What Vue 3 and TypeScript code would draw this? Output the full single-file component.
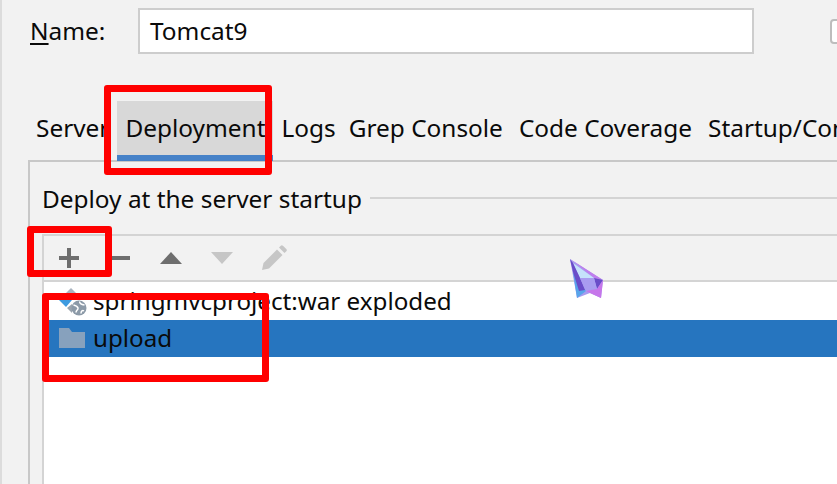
<script setup lang="ts">
const tabs: { label: string; active?: boolean }[] = [
  { label: 'Server' },
  { label: 'Deployment', active: true },
  { label: 'Logs' },
  { label: 'Grep Console' },
  { label: 'Code Coverage' },
  { label: 'Startup/Connection' },
]
</script>

<template>
  <div class="page">
    <div class="name-row">
      <label class="name-label"><span class="mnemonic">N</span>ame:</label>
      <div class="name-input">Tomcat9</div>
      <span class="checkbox"></span>
    </div>

    <nav class="tabs">
      <span v-for="t in tabs" :key="t.label" class="tab" :class="{ active: t.active }">{{ t.label }}</span>
    </nav>

    <section class="panel">
      <div class="group-title">
        <span>Deploy at the server startup</span>
        <span class="group-line"></span>
      </div>

      <div class="box">
        <div class="toolbar">
          <svg class="ic plus" width="20" height="20" viewBox="0 0 20 20"><path d="M8 0h4v8h8v4h-8v8H8v-8H0V8h8z" fill="#6e6e6e" /></svg>
          <svg class="ic minus" width="18" height="4" viewBox="0 0 18 4"><rect width="18" height="4" fill="#6e6e6e" /></svg>
          <svg class="ic up" width="22" height="12" viewBox="0 0 22 12"><path d="M11 0 22 12H0z" fill="#6e6e6e" /></svg>
          <svg class="ic down" width="22" height="12" viewBox="0 0 22 12"><path d="M0 0H22L11 12z" fill="#c6c6c6" /></svg>
          <svg class="ic pencil" width="25" height="25" viewBox="0 0 25 25"><path d="M0 25l1.500-7L15 4.500l5.500 5.500L7 23.500zM17 2.500l1.800-1.800a1.500 1.500 0 0 1 2.100 0l3.400 3.400a1.500 1.500 0 0 1 0 2.100L22.500 8z" fill="#c6c6c6" /></svg>
        </div>

        <ul class="list">
          <li class="row">
            <svg class="row-icon project" width="29" height="28" viewBox="0 0 29 28">
              <path d="M13 0l5 5-5 5-5-5z" fill="#a9b4c0" />
              <path d="M1 12h13l-6 7z" fill="#3d9be0" />
              <path d="M14 16l-5 4 5 5z" fill="#9aa3ad" />
              <circle cx="21" cy="20" r="7.500" fill="#8c9aa8" />
              <path d="M15.500 17c2 .5 4 1 4.500 3s-2 2-2 4.500M22 13.500c-1 1.500 1 3 4.500 3.500M26 23c-1.500-1-3 0-3 2.500" stroke="#fff" stroke-width="1.500" fill="none" />
            </svg>
            <span>springmvcproject:war exploded</span>
          </li>
          <li class="row selected">
            <svg class="row-icon" width="26" height="20" viewBox="0 0 26 20">
              <path d="M0 0h10l3 4h13v16H0z" fill="#87a1bd" />
            </svg>
            <span>upload</span>
          </li>
        </ul>
      </div>
    </section>

    <svg class="gem" width="36" height="42" viewBox="0 0 36 42">
      <path d="M1 1 34 22 32 40 21 35 8 40z" fill="#a79cf0" />
      <path d="M4 14 8 40 17 33 10 24z" fill="#58a5ea" />
      <path d="M1 1 34 22 25 20 8 6z" fill="#c07eec" />
      <path d="M4 5 25 20 11 20z" fill="#c5e2fb" />
      <path d="M1 1 4 5 11 20 16 32 10 33 4 14z" fill="#6a4cc8" />
      <path d="M25 20 34 22 28 31z" fill="#6a4cc8" />
      <path d="M11 20 25 20 28 31 17 33z" fill="#a99cf0" />
      <path d="M17 33 21 35 32 40 34 22 28 31z" fill="#c676ea" />
    </svg>

    <span class="mark mark-tab"></span>
    <span class="mark mark-add"></span>
    <span class="mark mark-list"></span>
  </div>
</template>

<style scoped>
.page {
  position: relative;
  width: 837px;
  height: 484px;
  overflow: hidden;
  background: #f2f2f2;
  color: #0a0a0a;
  font-family: "Noto Sans", "Open Sans", sans-serif;
  font-size: 24.4px;
  box-sizing: border-box;
  padding: 8px 0 0 26px;
  border-left: 2px solid #dcdcdc;
}
.name-row {
  display: flex;
  align-items: center;
  height: 46px;
  padding-left: 2px;
}
.name-label {
  flex: none;
  width: 108px;
  line-height: 46px;
}
.mnemonic {
  text-decoration: underline;
  text-underline-offset: 3px;
}
.name-input {
  box-sizing: border-box;
  width: 616px;
  height: 46px;
  line-height: 42px;
  padding-left: 10px;
  background: #fff;
  border: 2px solid #cdcdcd;
  flex: none;
}
.checkbox {
  box-sizing: border-box;
  width: 24px;
  height: 25px;
  margin-left: 76px;
  flex: none;
  background: #fff;
  border: 2px solid #bdbdbd;
  border-radius: 4px;
}
.tabs {
  display: flex;
  height: 60px;
  margin: 47px 0 0 8px;
  white-space: nowrap;
}
.tab {
  padding: 0 8px;
  line-height: 54px;
  height: 60px;
  box-sizing: border-box;
}
.tab:first-child {
  padding-left: 0;
}
.tab:nth-child(3) {
  padding-right: 5px;
}
.tab.active {
  background: #d8d8d8;
  border-bottom: 6px solid #4682c8;
}
.panel {
  box-sizing: border-box;
  height: 324px;
  margin-top: -1px;
  padding: 18px 0 0 12px;
  border-top: 2px solid #c8c8c8;
  border-left: 2px solid #c8c8c8;
}
.group-title {
  display: flex;
  align-items: center;
  gap: 8px;
  height: 36px;
}
.group-line {
  flex: 1;
  height: 2px;
  background: #d4d4d4;
}
.box {
  margin-top: 18px;
  border-top: 2px solid #d4d4d4;
  border-left: 2px solid #d4d4d4;
}
.toolbar {
  display: flex;
  align-items: center;
  height: 44px;
  border-bottom: 2px solid #d4d4d4;
}
.ic {
  flex: none;
}
.plus {
  margin-left: 15px;
}
.minus {
  margin-left: 33px;
}
.up {
  margin-left: 30px;
}
.down {
  margin-left: 29px;
}
.pencil {
  margin-left: 29px;
  margin-top: -2px;
}
.list {
  list-style: none;
  margin: 0;
  padding: 0;
  height: 300px;
  background: #fff;
  font-size: 24.2px;
}
.row {
  box-sizing: border-box;
  display: flex;
  align-items: center;
  gap: 8px;
  height: 38px;
  padding: 0 0 2px 15px;
  white-space: nowrap;
}
.row-icon {
  flex: none;
}
.project {
  margin: 4px -2px 0 -1px;
}
.row.selected {
  height: 37px;
  background: #2675bf;
}
.gem {
  position: absolute;
  left: 567px;
  top: 258px;
  filter: blur(0.6px);
}
.mark {
  position: absolute;
  box-sizing: border-box;
  border: 7px solid #ff0000;
  border-radius: 3px;
}
.mark-tab {
  left: 102px;
  top: 85px;
  width: 168px;
  height: 90px;
}
.mark-add {
  left: 25px;
  top: 226px;
  width: 85px;
  height: 51px;
}
.mark-list {
  left: 40px;
  top: 293px;
  width: 227px;
  height: 89px;
}
</style>
